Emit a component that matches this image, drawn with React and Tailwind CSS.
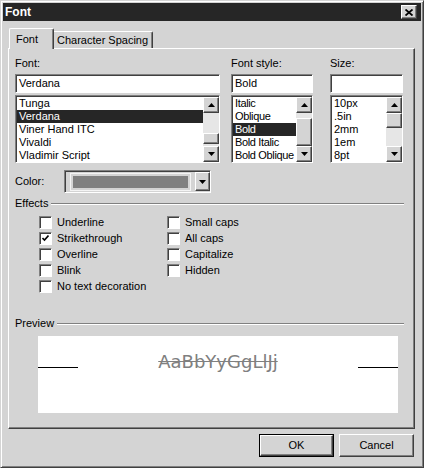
import React from "react";

const raised =
  "border border-t-white border-l-white border-r-[#404040] border-b-[#404040] shadow-[inset_-1px_-1px_#808080]";
const sunken =
  "border border-t-[#808080] border-l-[#808080] border-r-white border-b-white shadow-[inset_1px_1px_#404040]";

function Arrow({ down }) {
  return (
    <svg width="7" height="4" viewBox="0 0 7 4">
      <path d={down ? "M0 0h7L3.5 4z" : "M0 4h7L3.5 0z"} fill="black" />
    </svg>
  );
}

function ScrollBtn({ down }) {
  return (
    <div className={`w-4 h-4 shrink-0 flex items-center justify-center bg-[#d4d4d4] ${raised}`}>
      <Arrow down={down} />
    </div>
  );
}

function ListBox({ items, selected, space, thumb, tight }) {
  return (
    <div className={`h-[68px] mt-[2px] flex bg-white pt-[1px] pl-[1px] ${sunken}`}>
      <div className={`flex-1 flex flex-col overflow-hidden ${tight ? "tracking-[-0.35px]" : ""}`}>
        {items.map((it) => (
          <div
            key={it}
            className={`h-[13px] shrink-0 leading-[13px] pl-[2px] whitespace-nowrap ${
              it === selected ? "bg-[#262626] text-white" : ""
            }`}
          >
            {it}
          </div>
        ))}
      </div>
      <div className="w-4 flex flex-col">
        <ScrollBtn />
        <div className="flex-1 flex flex-col bg-[#e6e6e6]">
          <div style={{ height: space }} />
          <div className={`bg-[#d4d4d4] ${raised}`} style={{ height: thumb }} />
        </div>
        <ScrollBtn down />
      </div>
    </div>
  );
}

function Field({ label, value, list, width, ml }) {
  return (
    <div className={`flex flex-col ${width} ${ml}`}>
      <div className="h-[13px] leading-[13px]">{label}</div>
      <div className={`h-[19px] mt-[4px] bg-white pl-[3px] leading-[17px] ${sunken}`}>{value}</div>
      {list}
    </div>
  );
}

function Legend({ text }) {
  return (
    <div className="flex items-center h-[13px]">
      <span className="leading-[13px]">{text}</span>
      <div className="flex-1 ml-[3px] h-[2px] border-t border-t-[#808080] border-b border-b-white" />
    </div>
  );
}

function Check({ label, checked }) {
  return (
    <div className="flex items-center h-[16px]">
      <div className={`w-[13px] h-[13px] bg-white flex items-center justify-center ${sunken}`}>
        {checked && (
          <svg width="7" height="7" viewBox="0 0 7 7">
            <path d="M0.5 3l2 2 4-4.5" stroke="black" strokeWidth="1.6" fill="none" />
          </svg>
        )}
      </div>
      <span className="ml-[5px] leading-[13px]">{label}</span>
    </div>
  );
}

export default function App() {
  return (
    <div
      className={`w-[424px] h-[468px] p-[2px] bg-[#d4d4d4] font-['Liberation_Sans',Arial,sans-serif] text-[11px] text-black border border-t-[#d4d4d4] border-l-[#d4d4d4] border-r-[#404040] border-b-[#404040] shadow-[inset_1px_1px_white,inset_-1px_-1px_#808080] flex flex-col`}
    >
      <div className="h-[18px] bg-[#262626] flex items-center justify-between pl-[2px] pr-[4px]">
        <span className="text-white font-bold text-[12px]">Font</span>
        <div className={`w-[16px] h-[14px] bg-[#d4d4d4] flex items-center justify-center ${raised}`}>
          <svg width="8" height="7" viewBox="0 0 8 7">
            <path d="M0.5 0.5l7 6M7.5 0.5l-7 6" stroke="black" strokeWidth="1.8" />
          </svg>
        </div>
      </div>

      <div className="flex items-end mt-[7px] ml-[6px] h-[20px]">
        <div className="relative z-10 -mb-[1px] w-[45px] h-[21px] bg-[#d4d4d4] border-t border-l border-t-white border-l-white border-r border-r-[#404040] shadow-[inset_-1px_0_#808080] rounded-t-[2px] pl-[6px] pt-[4px] leading-[13px]">
          Font
        </div>
        <div className="w-[99px] h-[17px] bg-[#d4d4d4] border-t border-t-white border-r border-r-[#404040] shadow-[inset_-1px_0_#808080] rounded-tr-[2px] pl-[3px] pt-[2px] leading-[13px]">
          Character Spacing
        </div>
      </div>

      <div className="ml-[5px] w-[407px] h-[381px] bg-[#d4d4d4] border border-t-white border-l-white border-r-[#404040] border-b-[#404040] shadow-[inset_-1px_-1px_#808080] pt-[8px] pl-[6px] pr-[10px] flex flex-col">
        <div className="flex">
          <Field
            label="Font:"
            value="Verdana"
            width="w-[205px]"
            ml=""
            list={
              <ListBox
                items={["Tunga", "Verdana", "Viner Hand ITC", "Vivaldi", "Vladimir Script"]}
                selected="Verdana"
                space={20}
                thumb={11}
              />
            }
          />
          <Field
            label="Font style:"
            value="Bold"
            width="w-[82px]"
            ml="ml-[11px]"
            list={
              <ListBox
                items={["Italic", "Oblique", "Bold", "Bold Italic", "Bold Oblique"]}
                selected="Bold"
                space={5}
                thumb={28}
                tight
              />
            }
          />
          <Field
            label="Size:"
            value=""
            width="w-[73px]"
            ml="ml-[17px]"
            list={
              <ListBox items={["10px", ".5in", "2mm", "1em", "8pt"]} selected="" space={0} thumb={15} />
            }
          />
        </div>

        <div className="flex items-center mt-[7px] h-[23px]">
          <span className="w-[49px] leading-[13px]">Color:</span>
          <div className={`w-[147px] h-[23px] flex ${sunken} pt-[1px] pl-[1px]`}>
            <div className="flex-1 flex px-[4px] py-[1px]">
              <div className="flex-1 flex border border-[#f4f4f4] p-[2px]">
                <div className="flex-1 bg-[#808080]" />
              </div>
            </div>
            <div className={`w-[15px] h-[19px] bg-[#d4d4d4] flex items-center justify-center ${raised}`}>
              <Arrow down />
            </div>
          </div>
        </div>

        <div className="mt-[4px]">
          <Legend text="Effects" />
        </div>
        <div className="flex mt-[4px] pl-[24px]">
          <div className="w-[128px] flex flex-col">
            <Check label="Underline" />
            <Check label="Strikethrough" checked />
            <Check label="Overline" />
            <Check label="Blink" />
            <Check label="No text decoration" />
          </div>
          <div className="flex flex-col">
            <Check label="Small caps" />
            <Check label="All caps" />
            <Check label="Capitalize" />
            <Check label="Hidden" />
          </div>
        </div>

        <div className="mt-[23px]">
          <Legend text="Preview" />
        </div>
        <div className="mt-[6px] ml-[23px] w-[360px] h-[77px] bg-white flex items-baseline pt-[15px]">
          <div className="w-[40px] h-px bg-black mb-[2px]" />
          <div className="flex-1 text-center font-['DejaVu_Sans',sans-serif] text-[18px] leading-[21px] text-[#808080] line-through">
            AaBbYyGgLlJj
          </div>
          <div className="w-[40px] h-px bg-black mb-[2px]" />
        </div>
      </div>

      <div className="flex justify-end gap-[5px] mt-[5px] pr-[7px]">
        <div className="w-[75px] h-[23px] border border-black">
          <div className={`w-full h-full bg-[#d4d4d4] flex items-center justify-center ${raised}`}>OK</div>
        </div>
        <div className={`w-[75px] h-[23px] bg-[#d4d4d4] flex items-center justify-center ${raised}`}>Cancel</div>
      </div>
    </div>
  );
}
